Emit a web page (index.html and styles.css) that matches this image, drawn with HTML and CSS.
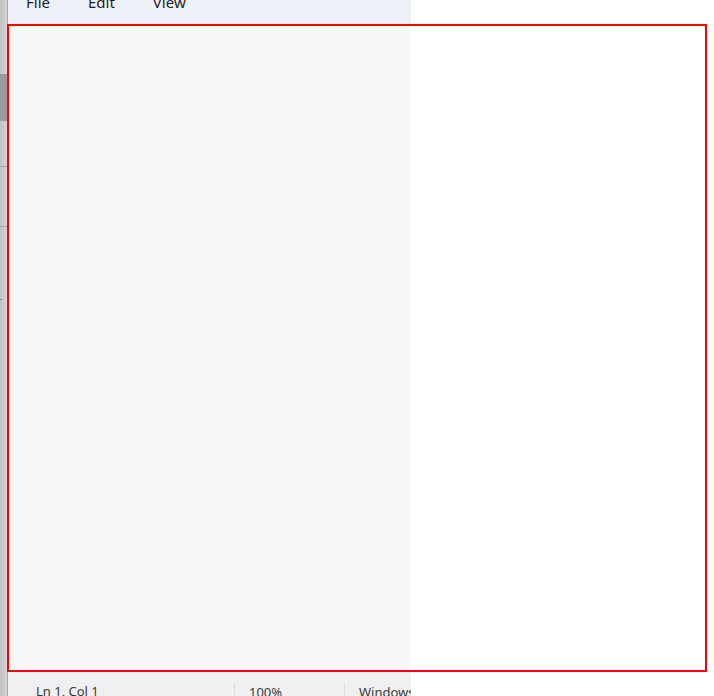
FILE: index.html
```html
<!DOCTYPE html>
<html>
<head>
<meta charset="utf-8">
<link rel="stylesheet" href="styles.css">
</head>
<body>
  <div class="strip">
    <div class="thumb"></div>
    <div class="rule rule-a"></div>
    <div class="rule rule-b"></div>
    <div class="plus">+</div>
  </div>
  <div class="window">
    <div class="menubar">
      <span class="menu-item">File</span>
      <span class="menu-item">Edit</span>
      <span class="menu-item">View</span>
    </div>
    <div class="editor"></div>
    <div class="status">
      <div class="cell cell-pos">Ln 1, Col 1</div>
      <div class="cell cell-zoom">100%</div>
      <div class="cell cell-eol">Windows (CRLF)</div>
    </div>
  </div>
  <div class="frame"></div>
</body>
</html>
```
FILE: styles.css
```css
html, body {
  margin: 0;
  padding: 0;
}
body {
  width: 714px;
  height: 696px;
  overflow: hidden;
  display: flex;
  background: #ffffff;
  position: relative;
  font-family: "Noto Sans", "Open Sans", sans-serif;
}
.strip {
  width: 7px;
  flex: none;
  height: 696px;
  background: linear-gradient(to right, #c2c2c2, #d4d4d4);
  border-right: 1px solid #a9a9a9;
  display: flex;
  flex-direction: column;
}
.thumb {
  margin-top: 74px;
  height: 47px;
  background: #9b9b9b;
}
.rule {
  height: 1px;
  background: #a8a8a8;
}
.rule-a { margin-top: 45px; }
.rule-b { margin-top: 59px; }
.plus {
  margin-top: 66px;
  margin-left: -4px;
  font-size: 11px;
  line-height: 11px;
  color: #7d8fb0;
}
.window {
  width: 403px;
  flex: none;
  display: flex;
  flex-direction: column;
  height: 696px;
}
.menubar {
  height: 24px;
  flex: none;
  background: #eef1f8;
  display: flex;
  gap: 38px;
  padding-left: 18px;
  overflow: hidden;
}
.menu-item {
  font-size: 15px;
  line-height: 20px;
  margin-top: -8px;
  color: #1c1c1c;
}
.editor {
  flex: 1;
  background: #f8f8f8;
}
.status {
  height: 24px;
  flex: none;
  background: #f0f0f2;
  display: flex;
  overflow: hidden;
  white-space: nowrap;
}
.cell {
  flex: none;
  font-size: 13px;
  line-height: 18px;
  color: #3a3a3a;
  padding-top: 10px;
  box-sizing: border-box;
}
.cell-pos {
  width: 226px;
  padding-left: 28px;
}
.cell-zoom {
  width: 110px;
  padding-left: 14px;
  border-left: 1px solid #dcdcdc;
  margin-top: 11px;
  padding-top: 0;
  margin-bottom: -10px;
}
.cell-eol {
  padding-left: 14px;
  border-left: 1px solid #dcdcdc;
  margin-top: 11px;
  padding-top: 0;
  margin-bottom: -10px;
}
.frame {
  position: absolute;
  left: 7px;
  top: 24px;
  width: 700px;
  height: 648px;
  box-sizing: border-box;
  border: 2px solid #ff0000;
}
```
